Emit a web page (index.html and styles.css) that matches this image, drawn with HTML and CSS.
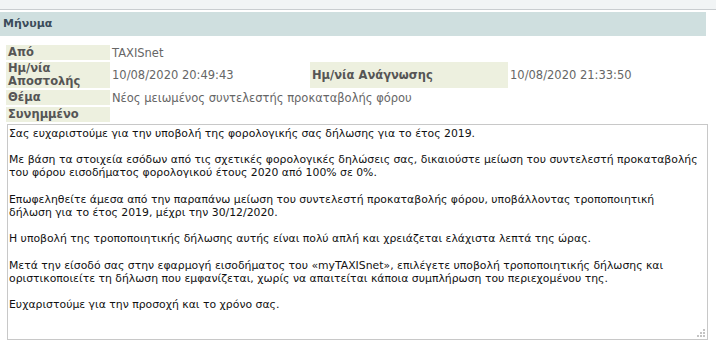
FILE: index.html
```html
<!DOCTYPE html>
<html>
<head>
	<title>Μήνυμα</title>
	<link rel="stylesheet" href="styles.css">
</head>
<body>
	<div class="top-strip"></div>
	<div class="panel-header">Μήνυμα</div>
	<table class="msg-info">
		<tr>
			<td class="label">Από</td>
			<td class="value">TAXISnet</td>
			<td></td>
			<td></td>
		</tr>
		<tr>
			<td class="label">Ημ/νία Αποστολής</td>
			<td class="value">10/08/2020 20:49:43</td>
			<td class="label label-wide">Ημ/νία Ανάγνωσης</td>
			<td class="value">10/08/2020 21:33:50</td>
		</tr>
		<tr>
			<td class="label">Θέμα</td>
			<td class="value" colspan="3">Νέος μειωμένος συντελεστής προκαταβολής φόρου</td>
		</tr>
		<tr>
			<td class="label">Συνημμένο</td>
			<td class="value" colspan="3"></td>
		</tr>
	</table>
	<div class="body-wrap">
		<textarea class="msg-body" readonly>Σας ευχαριστούμε για την υποβολή της φορολογικής σας δήλωσης για το έτος 2019.

Με βάση τα στοιχεία εσόδων από τις σχετικές φορολογικές δηλώσεις σας, δικαιούστε μείωση του συντελεστή προκαταβολής
του φόρου εισοδήματος φορολογικού έτους 2020 από 100% σε 0%.

Επωφεληθείτε άμεσα από την παραπάνω μείωση του συντελεστή προκαταβολής φόρου, υποβάλλοντας τροποποιητική
δήλωση για το έτος 2019, μέχρι την 30/12/2020.

Η υποβολή της τροποποιητικής δήλωσης αυτής είναι πολύ απλή και χρειάζεται ελάχιστα λεπτά της ώρας.

Μετά την είσοδό σας στην εφαρμογή εισοδήματος του «myTAXISnet», επιλέγετε υποβολή τροποποιητικής δήλωσης και
οριστικοποιείτε τη δήλωση που εμφανίζεται, χωρίς να απαιτείται κάποια συμπλήρωση του περιεχομένου της.

Ευχαριστούμε για την προσοχή και το χρόνο σας.</textarea>
		<svg class="grip" width="8" height="8" viewBox="0 0 8 8">
			<rect x="6" y="0" width="2" height="2"/>
			<rect x="3" y="3" width="2" height="2"/>
			<rect x="6" y="3" width="2" height="2"/>
			<rect x="0" y="6" width="2" height="2"/>
			<rect x="3" y="6" width="2" height="2"/>
			<rect x="6" y="6" width="2" height="2"/>
		</svg>
	</div>
</body>
</html>
```

FILE: styles.css
```css
body {
	margin: 0;
	font-family: "DejaVu Sans", Verdana, sans-serif;
	font-size: 11px;
	color: #333;
	background: #fff;
}

.top-strip {
	height: 9px;
	background-color: #f1f4f5;
	border-bottom: 1px solid #c9cdd0;
	margin-bottom: 2px;
}

.panel-header {
	width: 703px;
	height: 24px;
	line-height: 24px;
	padding-left: 3px;
	background-color: #cfdfdf;
	color: #3a4b5a;
	font-weight: bold;
	font-size: 11px;
}

.msg-info {
	margin: 7px 0 0 4px;
	border-spacing: 2px;
	font-size: 11.5px;
}

.msg-info td {
	padding: 0;
	height: 15px;
	vertical-align: middle;
}

.msg-info .label {
	width: 102px;
	background-color: #edf0df;
	color: #555;
	font-weight: bold;
	line-height: 13px;
	padding-left: 2px;
}

.msg-info .value {
	width: 196px;
	color: #666;
	padding-left: 0;
}

.msg-info .label-wide {
	width: 196px;
	padding-left: 2px;
}

.body-wrap {
	position: relative;
	width: 701px;
	margin-left: 7px;
}

.msg-body {
	display: block;
	box-sizing: border-box;
	width: 701px;
	height: 216px;
	margin: 0;
	padding: 2px 1px;
	border: 1px solid #c8c8c8;
	font-family: "DejaVu Sans", Verdana, sans-serif;
	font-size: 10.85px;
	line-height: 13.15px;
	color: #111;
	resize: none;
	outline: none;
}

.grip {
	position: absolute;
	right: 3px;
	bottom: 3px;
	fill: #c4c4c4;
}
```
